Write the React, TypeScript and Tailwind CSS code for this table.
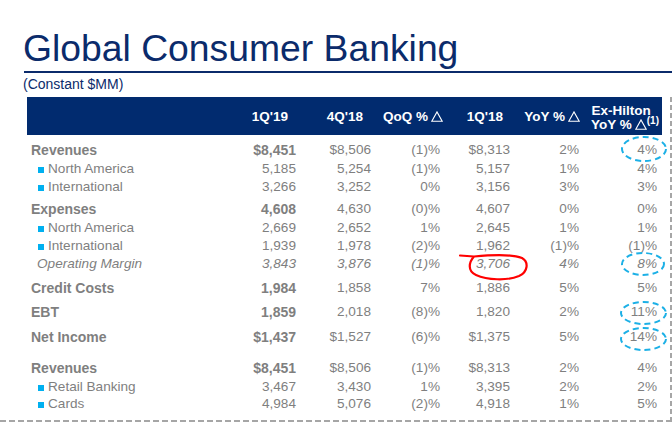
import React from "react";

type Row = {
  label: string;
  kind: "cat" | "sub" | "ital";
  v: string[];
  mt: string;
};

const rows: Row[] = [
  { label: "Revenues", kind: "cat", v: ["$8,451", "$8,506", "(1)%", "$8,313", "2%", "4%"], mt: "mt-[6px]" },
  { label: "North America", kind: "sub", v: ["5,185", "5,254", "(1)%", "5,157", "1%", "4%"], mt: "" },
  { label: "International", kind: "sub", v: ["3,266", "3,252", "0%", "3,156", "3%", "3%"], mt: "" },
  { label: "Expenses", kind: "cat", v: ["4,608", "4,630", "(0)%", "4,607", "0%", "0%"], mt: "mt-[5px]" },
  { label: "North America", kind: "sub", v: ["2,669", "2,652", "1%", "2,645", "1%", "1%"], mt: "" },
  { label: "International", kind: "sub", v: ["1,939", "1,978", "(2)%", "1,962", "(1)%", "(1)%"], mt: "" },
  { label: "Operating Margin", kind: "ital", v: ["3,843", "3,876", "(1)%", "3,706", "4%", "8%"], mt: "" },
  { label: "Credit Costs", kind: "cat", v: ["1,984", "1,858", "7%", "1,886", "5%", "5%"], mt: "mt-[7px]" },
  { label: "EBT", kind: "cat", v: ["1,859", "2,018", "(8)%", "1,820", "2%", "11%"], mt: "mt-[6px]" },
  { label: "Net Income", kind: "cat", v: ["$1,437", "$1,527", "(6)%", "$1,375", "5%", "14%"], mt: "mt-[7px]" },
  { label: "Revenues", kind: "cat", v: ["$8,451", "$8,506", "(1)%", "$8,313", "2%", "4%"], mt: "mt-[13px]" },
  { label: "Retail Banking", kind: "sub", v: ["3,467", "3,430", "1%", "3,395", "2%", "2%"], mt: "" },
  { label: "Cards", kind: "sub", v: ["4,984", "5,076", "(2)%", "4,918", "1%", "5%"], mt: "-mt-[1px]" },
];

function Label({ r }: { r: Row }) {
  if (r.kind === "cat") {
    return <div className="pl-[4px] font-bold text-[14px]">{r.label}</div>;
  }
  if (r.kind === "ital") {
    return <div className="pl-[10px] italic">{r.label}</div>;
  }
  return (
    <div className="pl-[11px] flex items-center gap-[4px]">
      <span className="block w-[6px] h-[6px] bg-[#00b0f0] mt-[1px]" />
      <span>{r.label}</span>
    </div>
  );
}

function Tri() {
  return (
    <svg
      className="inline-block ml-[3px] align-[-1px]"
      width="12"
      height="11"
      viewBox="0 0 12 11"
    >
      <polygon points="0.8,10.3 6,0.9 11.2,10.3" fill="none" stroke="#ffffff" strokeWidth="1.1" strokeLinejoin="miter" />
    </svg>
  );
}

export default function App() {
  return (
    <div className="relative w-[672px] h-[425px] overflow-hidden bg-white font-['Liberation_Sans',Arial,sans-serif]">
      <div className="pt-[30px] pl-[23px] text-[37.3px] leading-[37px] text-[#0b2b6b]">
        Global Consumer Banking
      </div>
      <div className="mt-[4px] ml-[24px] h-[2px] bg-[#0b2b6b]" />
      <div className="mt-[3px] pl-[23px] text-[14px] leading-[16px] text-[#0b2b6b]">
        (Constant $MM)
      </div>

      <div className="mt-[5px] flex">
        <div className="w-[670px] flex flex-col">
          <div className="pl-[27px] pr-[8px]">
            <div className="h-[38px] bg-[#012b6f] grid grid-cols-[199px_62px_75px_80px_60px_77px_82px] items-center text-white font-bold text-[13.5px] leading-[13px] whitespace-nowrap">
              <div />
              <div className="text-right">1Q'19</div>
              <div className="text-right">4Q'18</div>
              <div className="text-right">
                QoQ %<Tri />
              </div>
              <div className="text-right">1Q'18</div>
              <div className="text-right">
                YoY %<Tri />
              </div>
              <div className="flex flex-col items-center pt-[2px]">
                <div className="h-[13px] leading-[13px]">Ex-Hilton</div>
                <div className="h-[13px] leading-[13px] pl-[8px] mt-[1px]">
                  YoY %<Tri />
                  <span className="relative top-[-5px] text-[10px] leading-[10px]">(1)</span>
                </div>
              </div>
            </div>

            <div className="flex flex-col text-[#7f7f7f] text-[13.6px] leading-[18px]">
              {rows.map((r, i) => (
                <div
                  key={i}
                  className={`h-[18px] grid grid-cols-[199px_70px_75px_69px_70px_69px_78px] items-center ${r.mt} ${r.kind === "cat" ? "" : "pt-[1px]"} ${r.kind === "ital" ? "italic" : ""}`}
                >
                  <Label r={r} />
                  {r.v.map((val, j) => (
                    <div
                      key={j}
                      className={`text-right ${j === 0 && r.kind === "cat" ? "font-bold text-[14px]" : ""}`}
                    >
                      {val}
                    </div>
                  ))}
                </div>
              ))}
            </div>
          </div>
          <div className="mt-[8px] h-[2px] bg-[repeating-linear-gradient(90deg,#a6a6a6_0px,#a6a6a6_6px,transparent_6px,transparent_9px)]" />
        </div>
        <div className="w-[2px] bg-[repeating-linear-gradient(180deg,#a6a6a6_0px,#a6a6a6_5px,transparent_5px,transparent_8px)]" />
      </div>

      <svg
        className="absolute left-0 top-0 pointer-events-none"
        width="672"
        height="425"
        viewBox="0 0 672 425"
      >
        <g fill="none" stroke="#1cb0e6" strokeWidth="2" strokeDasharray="6 4">
          <ellipse cx="644" cy="149" rx="22" ry="12" />
          <ellipse cx="643" cy="264" rx="21" ry="11" />
          <ellipse cx="643.5" cy="313" rx="22.5" ry="11" />
          <ellipse cx="643.5" cy="339" rx="22.5" ry="11" />
        </g>
        <path
          d="M460 255.5 L474 256.5 C 469 262, 467 271, 476 275 C 487 280, 507 281, 519 276 C 528 272, 529 262, 522 258 C 512 254, 490 255, 474 256.5"
          fill="none"
          stroke="#ff0000"
          strokeWidth="2.2"
          strokeLinecap="round"
          strokeLinejoin="round"
        />
      </svg>
    </div>
  );
}
